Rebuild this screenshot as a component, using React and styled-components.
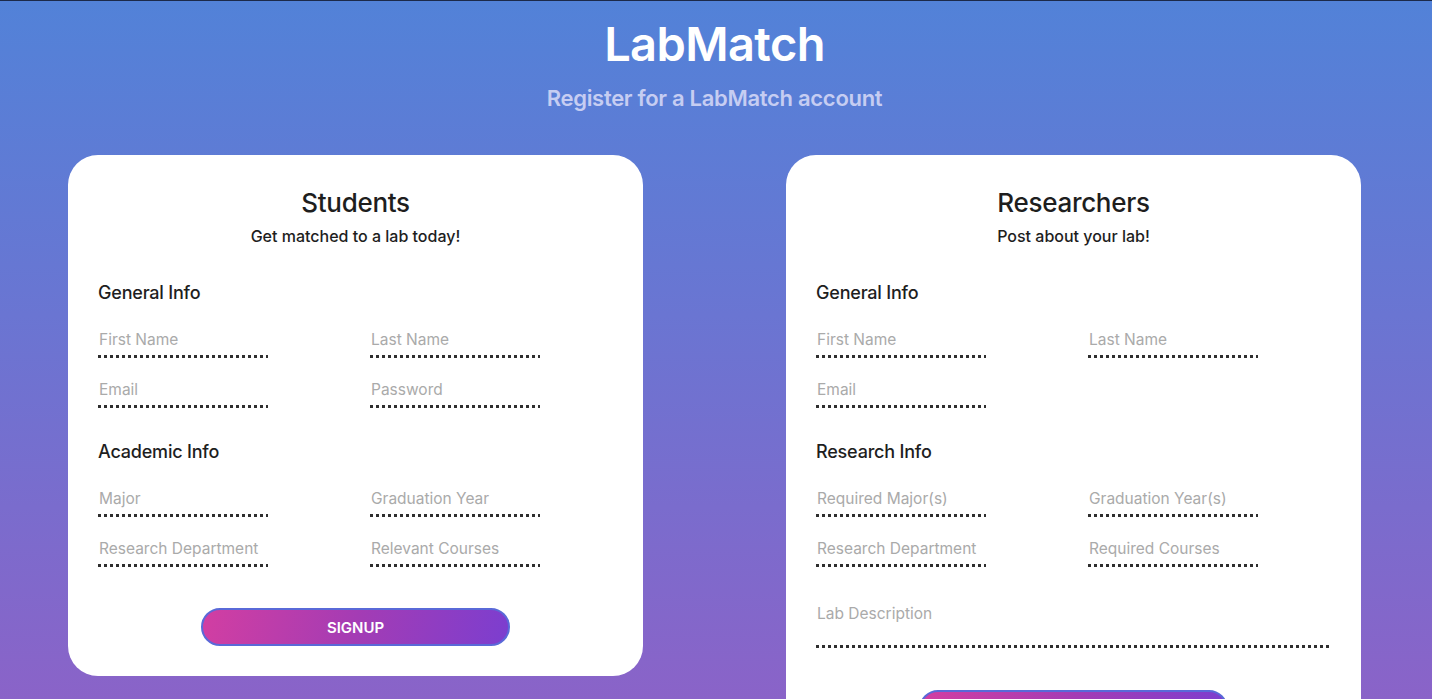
import * as React from "react";
import styled, { createGlobalStyle } from "styled-components";

const GlobalStyle = createGlobalStyle`
  html, body {
    margin: 0;
    padding: 0;
  }
  body {
    font-family: Inter, "Noto Sans", "Liberation Sans", sans-serif;
    background: linear-gradient(to bottom, #5282d8 0%, #6a75d2 45%, #8a63c8 100%);
    background-attachment: fixed;
    min-height: 100vh;
    border-top: 1px solid #1c2a4a;
  }
`;

const studentFields = {
  general: [
    ["First Name", "Last Name"],
    ["Email", "Password"],
  ],
  academic: [
    ["Major", "Graduation Year"],
    ["Research Department", "Relevant Courses"],
  ],
};

const researcherFields = {
  general: [
    ["First Name", "Last Name"],
    ["Email", null],
  ],
  research: [
    ["Required Major(s)", "Graduation Year(s)"],
    ["Research Department", "Required Courses"],
  ],
};

const FieldGrid = ({ rows }) => (
  <Grid>
    {rows.flat().map((label, i) =>
      label ? <Field key={i} placeholder={label} /> : <span key={i} />
    )}
  </Grid>
);

const App = () => {
  return (
    <Page>
      <GlobalStyle />
      <Header>
        <h1>LabMatch</h1>
        <p>Register for a LabMatch account</p>
      </Header>
      <Cards>
        <Card>
          <CardTitle>Students</CardTitle>
          <CardSub>Get matched to a lab today!</CardSub>
          <Section>General Info</Section>
          <FieldGrid rows={studentFields.general} />
          <Section>Academic Info</Section>
          <FieldGrid rows={studentFields.academic} />
          <SignupButton>SIGNUP</SignupButton>
        </Card>
        <Card>
          <CardTitle>Researchers</CardTitle>
          <CardSub>Post about your lab!</CardSub>
          <Section>General Info</Section>
          <FieldGrid rows={researcherFields.general} />
          <Section>Research Info</Section>
          <FieldGrid rows={researcherFields.research} />
          <Description placeholder="Lab Description" />
          <SignupButton $gap={42}>SIGNUP</SignupButton>
        </Card>
      </Cards>
    </Page>
  );
};

const Page = styled.div`
  padding: 0 71px 40px 68px;
`;

const Header = styled.header`
  text-align: center;
  color: #fff;

  h1 {
    margin: 0;
    padding-top: 15px;
    font-size: 47px;
    font-weight: 600;
    line-height: 56px;
    letter-spacing: -0.6px;
  }

  p {
    margin: 13px 0 0;
    font-size: 22px;
    font-weight: 600;
    line-height: 26px;
    color: #c6cdf2;
    letter-spacing: -0.3px;
  }
`;

const Cards = styled.div`
  display: grid;
  grid-template-columns: 575px 575px;
  column-gap: 143px;
  align-items: start;
  margin-top: 44px;
`;

const Card = styled.section`
  background: #fff;
  border-radius: 30px;
  padding: 31px 30px 30px;
  display: flex;
  flex-direction: column;
`;

const CardTitle = styled.h2`
  margin: 0;
  text-align: center;
  font-size: 26px;
  font-weight: 500;
  line-height: 34px;
  color: #1e1e1e;
  letter-spacing: -0.3px;
`;

const CardSub = styled.p`
  margin: 6px 0 0;
  text-align: center;
  font-size: 16px;
  font-weight: 500;
  line-height: 20px;
  color: #1e1e1e;
`;

const Section = styled.h3`
  margin: 35px 0 24px;
  font-size: 18px;
  font-weight: 500;
  line-height: 24px;
  color: #1e1e1e;
  letter-spacing: -0.2px;
`;

const Grid = styled.div`
  display: grid;
  grid-template-columns: 272px 1fr;
  row-gap: 21px;
  margin-bottom: -3px;
`;

const Field = styled.input`
  width: 170px;
  box-sizing: border-box;
  border: none;
  outline: none;
  padding: 0 0 8px 1px;
  font-family: inherit;
  font-size: 15.5px;
  line-height: 21px;
  color: #333;
  background-image: linear-gradient(to right, #2e2e2e 50%, transparent 50%);
  background-position: left bottom;
  background-size: 6px 3px;
  background-repeat: repeat-x;

  &::placeholder {
    color: #aaaaaa;
  }
`;

const Description = styled(Field)`
  width: 100%;
  margin-top: 39px;
  padding-bottom: 24px;
`;

const SignupButton = styled.button`
  align-self: center;
  width: 309px;
  height: 38px;
  margin-top: ${(p) => p.$gap ?? 44}px;
  border: 2px solid #5a69d8;
  border-radius: 19px;
  background: linear-gradient(100deg, #d23ea2 0%, #a43cb4 50%, #7c3ecf 100%);
  color: #fff;
  font-family: inherit;
  font-size: 15px;
  font-weight: 600;
  cursor: pointer;
`;

export default App;
